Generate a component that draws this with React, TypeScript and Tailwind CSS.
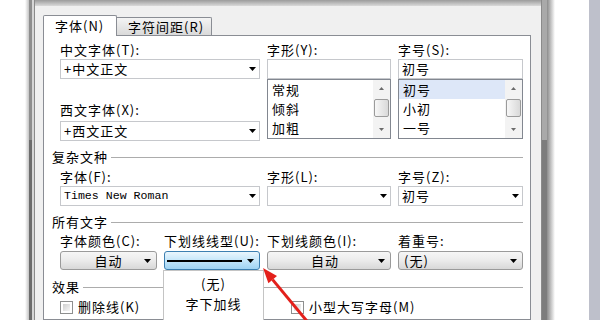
import React from "react";

const cjk = "font-['Noto_Sans_CJK_SC',sans-serif]";

function Tri({ up = false, color = "#000", w = 7, h = 4 }: { up?: boolean; color?: string; w?: number; h?: number }) {
	return (
		<svg width={w} height={h} viewBox={`0 0 ${w} ${h}`} className="shrink-0">
			{up ? <path d={`M0 ${h}H${w}L${w / 2} 0z`} fill={color} /> : <path d={`M0 0H${w}L${w / 2} ${h}z`} fill={color} />}
		</svg>
	);
}

function Label({ children }: { children: React.ReactNode }) {
	return <div className="h-4 leading-4 whitespace-nowrap">{children}</div>;
}

function Combo({ text, mono = false, arrow = true }: { text?: string; mono?: boolean; arrow?: boolean }) {
	return (
		<div className="h-[20px] border border-[#c6c8cc] bg-white flex items-center pl-[3px] pr-[3px]">
			<span
				className={
					mono
						? "flex-1 leading-4 text-[11.6px] tracking-normal font-['Liberation_Mono',monospace]"
						: "flex-1 leading-4 whitespace-nowrap"
				}
			>
				{text}
			</span>
			{arrow && <Tri />}
		</div>
	);
}

function ScrollBar() {
	return (
		<div className="w-[17px] flex flex-col bg-[#f3f3f3]">
			<div className="h-[17px] flex items-center justify-center">
				<Tri up color="#6a6a6a" w={5} h={3} />
			</div>
			<div className="mx-px mt-[2px] h-[18px] rounded-[2px] border border-[#9b9b9b] bg-gradient-to-r from-[#f7f7f7] to-[#d9d9d9]" />
			<div className="flex-1" />
			<div className="h-[17px] flex items-center justify-center">
				<Tri color="#6a6a6a" w={5} h={3} />
			</div>
		</div>
	);
}

function ListBox({ items, selected = -1 }: { items: string[]; selected?: number }) {
	return (
		<div className="h-[60px] border border-[#828790] bg-white flex">
			<div className="flex-1 flex flex-col">
				{items.map((it, i) => (
					<div key={it} className={`h-[19px] leading-[19px] pl-[4px] ${i === selected ? "bg-[#dde7f8]" : ""}`}>
						{it}
					</div>
				))}
			</div>
			<ScrollBar />
		</div>
	);
}

function Section({ title }: { title: string }) {
	return (
		<div className="-ml-[8px] h-4 flex items-center">
			<span className="leading-4 whitespace-nowrap">{title}</span>
			<div className="flex-1 h-px bg-[#acacac] ml-[3px]" />
		</div>
	);
}

function DropBtn({ children, active = false, center = true }: { children?: React.ReactNode; active?: boolean; center?: boolean }) {
	return (
		<div
			className={`h-[19px] rounded-[3px] border flex items-center pr-[5px] ${
				active
					? "border-[#3c7fb1] bg-gradient-to-b from-[#eaf6fd] via-[#c4e6fa] to-[#9fd3f3]"
					: "border-[#9a9a9a] bg-gradient-to-b from-[#f6f6f6] via-[#ebebeb] to-[#d8d8d8]"
			}`}
		>
			<div className={`flex-1 leading-4 whitespace-nowrap ${center ? "text-center" : "pl-[5px]"}`}>{children}</div>
			<Tri />
		</div>
	);
}

function CheckBox({ label }: { label: string }) {
	return (
		<div className="flex items-center h-4">
			<div className="w-[13px] h-[13px] border border-[#8e8f8f] bg-white p-[2px]">
				<div className="w-full h-full bg-gradient-to-br from-[#cfcfcf] to-[#f7f7f7]" />
			</div>
			<span className="ml-[5px] leading-4 whitespace-nowrap">{label}</span>
		</div>
	);
}

export default function App() {
	return (
		<div className={`relative w-[600px] h-[320px] overflow-hidden flex bg-white text-black text-[13px] tracking-[1px] ${cjk}`}>
			{/* left edge of the window behind */}
			<div className="w-[25px] bg-white" />
			<div className="w-[4px] bg-gradient-to-r from-white to-[#c4c4c4]" />
			<div className="w-[3px] flex flex-col">
				<div className="h-[140px] bg-[#8e8e8e]" />
				<div className="flex-1 bg-[#6c6c6c]" />
			</div>
			<div className="w-[2px] bg-[#d6d6d6]" />
			<div className="w-px bg-[#8a8a8a]" />

			{/* dialog */}
			<div className="w-[506px] flex flex-col bg-[#f0f0f0]">
				<div className="h-[6px] bg-gradient-to-b from-[#9c9c9c] to-[#dadada]" />
				<div className="h-[29px] flex items-end pl-[8px]">
					<div className="relative z-10 -mb-px w-[74px] h-[21px] border border-b-0 border-[#8a8d94] bg-white flex items-center pl-[11px] rounded-t-[2px]">
						<span className="leading-4 whitespace-nowrap">字体(N)</span>
					</div>
					<div className="w-[95px] h-[18px] border border-l-0 border-b-0 border-[#8a8d94] bg-gradient-to-b from-[#f4f4f4] to-[#dadada] flex items-center pl-[11px] rounded-tr-[2px]">
						<span className="leading-4 whitespace-nowrap">字符间距(R)</span>
					</div>
				</div>

				<div className="flex-1 ml-[8px] mr-[10px] border border-[#8a8d94] bg-white pl-[16px] pr-[7px] pt-[6px] flex flex-col">
					<div className="grid grid-cols-[200px_124px_125px] gap-x-[7px]">
						<div className="flex flex-col">
							<Label>中文字体(T):</Label>
							<div className="mt-px">
								<Combo text="+中文正文" />
							</div>
							<div className="mt-[23px]">
								<Label>西文字体(X):</Label>
							</div>
							<div className="mt-[3px]">
								<Combo text="+西文正文" />
							</div>
						</div>
						<div className="flex flex-col">
							<Label>字形(Y):</Label>
							<div className="mt-px">
								<Combo arrow={false} />
							</div>
							<ListBox items={["常规", "倾斜", "加粗"]} />
						</div>
						<div className="flex flex-col">
							<Label>字号(S):</Label>
							<div className="mt-px">
								<Combo text="初号" arrow={false} />
							</div>
							<ListBox items={["初号", "小初", "一号"]} selected={0} />
						</div>
					</div>

					<div className="mt-[8px]">
						<Section title="复杂文种" />
					</div>
					<div className="mt-[4px] grid grid-cols-[200px_124px_125px] gap-x-[7px] gap-y-px">
						<Label>字体(F):</Label>
						<Label>字形(L):</Label>
						<Label>字号(Z):</Label>
						<Combo text="Times New Roman" mono />
						<Combo text="" />
						<Combo text="初号" />
					</div>

					<div className="mt-[8px]">
						<Section title="所有文字" />
					</div>
					<div className="mt-[3px] grid grid-cols-[97px_96px_124px_125px] gap-x-[7px] gap-y-[2px]">
						<Label>字体颜色(C):</Label>
						<Label>下划线线型(U):</Label>
						<Label>下划线颜色(I):</Label>
						<Label>着重号:</Label>
						<DropBtn>
							<span className="pl-[12px]">自动</span>
						</DropBtn>
						<div className="relative">
							<div className="h-[19px] rounded-[3px] border border-[#3c7fb1] bg-gradient-to-b from-[#eaf6fd] via-[#c4e6fa] to-[#9fd3f3] flex items-center pl-[2px] pr-[5px]">
								<div className="flex-1 h-[2px] bg-black mr-[5px]" />
								<Tri />
							</div>
							<div className="absolute z-20 left-[-1px] top-[19px] w-[101px] h-[60px] bg-white border border-[#c4c4c4] pt-[3px]">
								<div className="h-[20px] leading-[20px] text-center">(无)</div>
								<div className="h-[20px] leading-[20px] text-center">字下加线</div>
							</div>
						</div>
						<DropBtn>
							<span className="pl-[4px]">自动</span>
						</DropBtn>
						<DropBtn center={false}>(无)</DropBtn>
					</div>

					<div className="mt-[9px]">
						<Section title="效果" />
					</div>
					<div className="mt-[4px] grid grid-cols-[231px_1fr]">
						<CheckBox label="删除线(K)" />
						<CheckBox label="小型大写字母(M)" />
					</div>
				</div>
			</div>

			{/* right edge */}
			<div className="w-px bg-[#8a8a8a]" />
			<div className="w-[5px] flex flex-col">
				<div className="h-[140px] bg-[#a9a9a9]" />
				<div className="flex-1 bg-[#7d7d7d]" />
			</div>
			<div className="w-[8px] bg-gradient-to-r from-[#8c8c8c] to-white" />
			<div className="w-[34px] bg-white" />
			<div className="w-[11px] bg-[#bec0cb]" />

			{/* red annotation arrow */}
			<svg className="absolute inset-0 z-30 pointer-events-none" width="600" height="320" viewBox="0 0 600 320">
				<line x1="272.6" y1="279.6" x2="311" y2="326" stroke="#e3201b" strokeWidth="3" />
				<polygon points="263,268 277,276 268.4,283.3" fill="#e3201b" />
			</svg>
		</div>
	);
}
